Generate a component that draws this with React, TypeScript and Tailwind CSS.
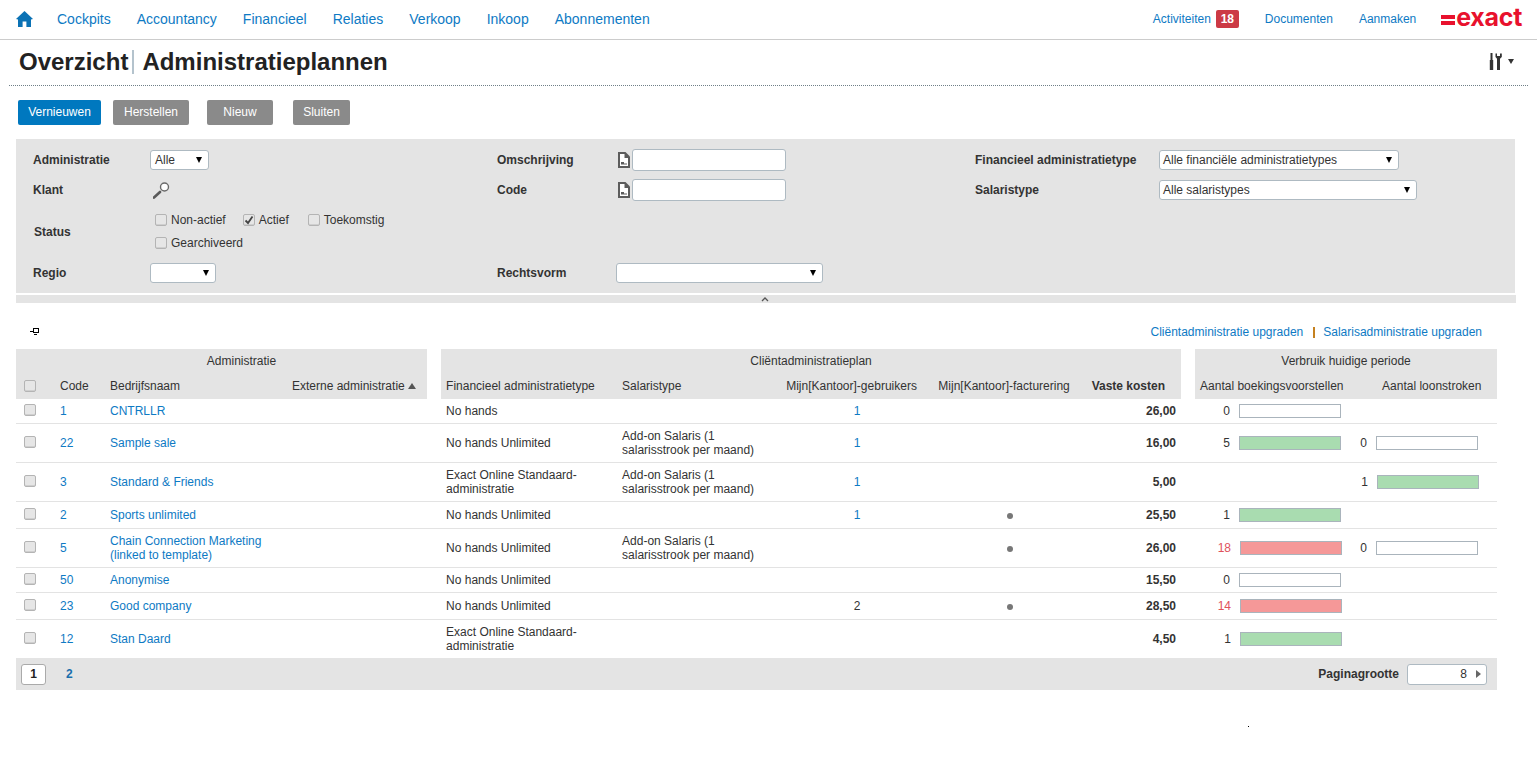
import { ReactNode } from 'react';

const navItems = ['Cockpits', 'Accountancy', 'Financieel', 'Relaties', 'Verkoop', 'Inkoop', 'Abonnementen'];

type Usage = { n: number; color: 'none' | 'green' | 'red'; shift?: boolean; numClass?: string };

type Row = {
  code: string;
  name: ReactNode;
  fin: ReactNode;
  sal?: boolean;
  users?: string;
  usersDark?: boolean;
  billing?: boolean;
  cost: string;
  boek?: Usage;
  loon?: Usage;
  h: string;
};

const twoLineExact = (
  <>
    Exact Online Standaard-
    <br />
    administratie
  </>
);

const rows: Row[] = [
  { code: '1', name: 'CNTRLLR', fin: 'No hands', users: '1', cost: '26,00', boek: { n: 0, color: 'none' }, h: 'h-[25px]' },
  { code: '22', name: 'Sample sale', fin: 'No hands Unlimited', sal: true, users: '1', cost: '16,00', boek: { n: 5, color: 'green' }, loon: { n: 0, color: 'none' }, h: 'h-[39px]' },
  { code: '3', name: 'Standard & Friends', fin: twoLineExact, sal: true, users: '1', cost: '5,00', loon: { n: 1, color: 'green', shift: true }, h: 'h-[39px]' },
  { code: '2', name: 'Sports unlimited', fin: 'No hands Unlimited', users: '1', billing: true, cost: '25,50', boek: { n: 1, color: 'green' }, h: 'h-[27px]' },
  {
    code: '5',
    name: (
      <>
        Chain Connection Marketing
        <br />
        (linked to template)
      </>
    ),
    fin: 'No hands Unlimited',
    sal: true,
    billing: true,
    cost: '26,00',
    boek: { n: 18, color: 'red', shift: true, numClass: 'text-[#e0525c]' },
    loon: { n: 0, color: 'none' },
    h: 'h-[39px]',
  },
  { code: '50', name: 'Anonymise', fin: 'No hands Unlimited', cost: '15,50', boek: { n: 0, color: 'none' }, h: 'h-[25px]' },
  { code: '23', name: 'Good company', fin: 'No hands Unlimited', users: '2', usersDark: true, billing: true, cost: '28,50', boek: { n: 14, color: 'red', shift: true, numClass: 'text-[#e0525c]' }, h: 'h-[27px]' },
  { code: '12', name: 'Stan Daard', fin: twoLineExact, cost: '4,50', boek: { n: 1, color: 'green', shift: true }, h: 'h-[38px]' },
];

function HomeIcon() {
  return (
    <svg width="17" height="16" viewBox="0 0 17 16" className="block">
      <path d="M8.5 0 L17 8 L15 8.6 V16 H10.4 V10.6 H6.6 V16 H2 V8.6 L0 8 Z" fill="#0b72b5" />
    </svg>
  );
}

function ExactLogo() {
  return (
    <div className="flex items-center">
      <div className="mt-[2px] flex w-[14px] flex-col gap-[2px]">
        <div className="h-[4px] bg-[#e8112d]" />
        <div className="h-[4px] bg-[#e8112d]" />
      </div>
      <span className="ml-px -mt-[3px] font-['Inter',sans-serif] text-[25px] leading-[26px] font-bold tracking-[-0.3px] text-[#e8112d]">exact</span>
    </div>
  );
}

function ToolsIcon() {
  return (
    <svg width="14" height="17" viewBox="0 0 14 17" className="block">
      <path d="M1.5 0 H3.5 V7 H4.2 V17 H0.8 V7 H1.5 Z" fill="#333" />
      <path d="M6.5 0.5 H8 V3 H11 V0.5 H12.8 V4 L11 5.8 V17 H8 V5.8 L6.5 4 Z" fill="#333" />
    </svg>
  );
}

function DocIcon() {
  return (
    <svg width="12" height="16" viewBox="0 0 12 16" className="block">
      <path d="M0 0 H7.5 L12 4.5 V16 H0 Z" fill="#5c5c5c" />
      <path d="M2 2 H6.5 V6 H10 V14 H2 Z" fill="#fff" />
      <path d="M3 10 H6 V11.5 H9 V12.5 H3 Z" fill="#5c5c5c" />
    </svg>
  );
}

function SearchIcon() {
  return (
    <svg width="17" height="17" viewBox="0 0 17 17" className="block">
      <path d="M1 15.5 L7 10" stroke="#5a5a5a" strokeWidth="2.6" strokeLinecap="round" />
      <circle cx="11.5" cy="5" r="4" fill="#fff" stroke="#6a6a6a" strokeWidth="1.4" />
    </svg>
  );
}

function PinIcon() {
  return (
    <svg width="9" height="7" viewBox="0 0 9 7" className="-mt-[2px] block">
      <path d="M0 3.5 H3" stroke="#000" />
      <rect x="3.5" y="0.5" width="5" height="4" fill="none" stroke="#000" />
      <path d="M4 6.5 H7" stroke="#000" />
    </svg>
  );
}

function Checkbox({ checked }: { checked?: boolean }) {
  return (
    <span className="flex h-3 w-3 shrink-0 items-center justify-center rounded-[2px] border border-[#b4b4b4] bg-[#e6e6e6] shadow-[inset_0_-1px_0_#cfcfcf]">
      {checked && (
        <svg width="10" height="10" viewBox="0 0 10 10">
          <path d="M1.5 5.5 L4 8 L8.5 1.5" fill="none" stroke="#444" strokeWidth="1.8" />
        </svg>
      )}
    </span>
  );
}

function Select({ width, label, pad = 'pl-1' }: { width: string; label?: string; pad?: string }) {
  return (
    <div className={`flex h-5 ${width} items-center justify-between rounded-[3px] border border-[#aebac2] bg-white pr-[6px] ${pad}`}>
      <span>{label}</span>
      <span className="h-0 w-0 border-x-[3.5px] border-t-[6px] border-x-transparent border-t-black" />
    </div>
  );
}

function TextField() {
  return (
    <div className="flex items-center gap-[2px] pl-px">
      <DocIcon />
      <input className="h-[22px] w-[154px] rounded-[3px] border border-[#aebac2] bg-white outline-none" />
    </div>
  );
}

function Label({ children }: { children: ReactNode }) {
  return <div className="font-bold text-[#333]">{children}</div>;
}

function UsageCell({ usage, numWidth }: { usage?: Usage; numWidth: string }) {
  if (!usage) return null;
  const fill = usage.color === 'green' ? 'bg-[#a9dcb0]' : usage.color === 'red' ? 'bg-[#f59898]' : 'bg-white';
  return (
    <div className={`flex items-center ${usage.shift ? 'ml-px' : ''}`}>
      <span className={`${numWidth} text-right ${usage.numClass ?? ''}`}>{usage.n}</span>
      <span className={`ml-[9px] h-[14px] w-[102px] border border-[#aab4bc] ${fill}`} />
    </div>
  );
}

function Btn({ children, className }: { children: ReactNode; className: string }) {
  return (
    <button className={`flex h-[25px] items-center justify-center rounded-[2px] pb-[2px] text-white ${className}`}>
      {children}
    </button>
  );
}

export default function App() {
  return (
    <div className="min-h-[772px] bg-white font-['Liberation_Sans',Arial,sans-serif] text-xs text-[#333]">
      {/* top navigation */}
      <header className="flex h-10 items-center justify-between border-b border-[#cccccc] pr-[15px] pb-[2px] pl-4">
        <nav className="flex items-center">
          <HomeIcon />
          <div className="ml-6 flex gap-[26px] text-sm text-[#0e7ac4]">
            {navItems.map((item) => (
              <a key={item}>{item}</a>
            ))}
          </div>
        </nav>
        <div className="flex items-center text-[#0e7ac4]">
          <a>Activiteiten</a>
          <span className="ml-[5px] flex h-[18px] w-[23px] items-center justify-center rounded-[2px] bg-[#cc3a45] font-bold text-white">
            18
          </span>
          <a className="ml-[26px]">Documenten</a>
          <a className="ml-[26px]">Aanmaken</a>
          <div className="ml-[25px]">
            <ExactLogo />
          </div>
        </div>
      </header>

      {/* page title */}
      <div className="mx-[9px] flex h-[46px] items-center justify-between border-b border-dotted border-[#6f7f87] pr-[14px] pb-[2px] pl-[10px]">
        <h1 className="flex items-center text-2xl leading-7 font-bold text-[#222]">
          Overzicht
          <span className="mr-[8px] ml-[4px] h-[24px] w-[2px] bg-[#b4c3cd]" />
          Administratieplannen
        </h1>
        <div className="flex items-center gap-[5px]">
          <ToolsIcon />
          <span className="h-0 w-0 border-x-[3.5px] border-t-[5px] border-x-transparent border-t-[#333]" />
        </div>
      </div>

      {/* actions */}
      <div className="mt-[14px] flex pl-[18px]">
        <Btn className="w-[83px] bg-[#0078bf]">Vernieuwen</Btn>
        <Btn className="ml-3 w-[76px] bg-[#8a8a8a]">Herstellen</Btn>
        <Btn className="ml-[18px] w-[66px] bg-[#8a8a8a]">Nieuw</Btn>
        <Btn className="ml-5 w-[57px] bg-[#8a8a8a]">Sluiten</Btn>
      </div>

      {/* filters */}
      <div className="mt-[14px] ml-4 grid h-[154px] w-[1499px] grid-cols-[117px_347px_120px_358px_184px_1fr] grid-rows-[30px_30px_52px_32px] items-center bg-[#e4e4e4] pt-[6px] pl-[17px]">
        <Label>Administratie</Label>
        <Select width="w-[59px]" label="Alle" />
        <Label>Omschrijving</Label>
        <TextField />
        <Label>Financieel administratietype</Label>
        <Select width="w-[240px]" pad="pl-[3px]" label="Alle financiële administratietypes" />

        <Label>Klant</Label>
        <div className="pl-[3px]">
          <SearchIcon />
        </div>
        <Label>Code</Label>
        <TextField />
        <Label>Salaristype</Label>
        <Select width="w-[258px]" pad="pl-[3px]" label="Alle salaristypes" />

        <div className="mt-[2px] pl-px">
          <Label>Status</Label>
        </div>
        <div className="flex flex-col gap-[9px] pl-[5px]">
          <div className="flex h-[14px] items-center">
            <Checkbox />
            <span className="ml-1">Non-actief</span>
            <span className="ml-[17px]">
              <Checkbox checked />
            </span>
            <span className="ml-1">Actief</span>
            <span className="ml-[19px]">
              <Checkbox />
            </span>
            <span className="ml-1">Toekomstig</span>
          </div>
          <div className="flex h-[14px] items-center">
            <Checkbox />
            <span className="ml-1">Gearchiveerd</span>
          </div>
        </div>
        <div />
        <div />
        <div />
        <div />

        <Label>Regio</Label>
        <Select width="w-[66px]" />
        <Label>Rechtsvorm</Label>
        <div className="-ml-px">
          <Select width="w-[207px]" />
        </div>
        <div />
        <div />
      </div>

      {/* collapse handle */}
      <div className="mt-[2px] ml-4 flex h-2 w-[1500px] items-center justify-center bg-[#e4e4e4] pr-[2px]">
        <svg width="8" height="5" viewBox="0 0 8 5" className="block">
          <path d="M1 4 L4 1 L7 4" fill="none" stroke="#555" strokeWidth="1.3" />
        </svg>
      </div>

      {/* table toolbar */}
      <div className="mt-[21px] flex h-4 items-center justify-between pr-[55px] pl-[30px]">
        <PinIcon />
        <div className="flex items-center text-[#0e7ac4]">
          <a>Cliëntadministratie upgraden</a>
          <span className="mr-[8px] ml-[10px] h-[11px] w-[2px] bg-[#c5811f]" />
          <a>Salarisadministratie upgraden</a>
        </div>
      </div>

      {/* table */}
      <table className="mt-[9px] ml-4 w-[1481px] table-fixed border-separate border-spacing-0 text-left">
        <colgroup>
          <col className="w-[38px]" />
          <col className="w-[50px]" />
          <col className="w-[182px]" />
          <col className="w-[141px]" />
          <col className="w-[14px]" />
          <col className="w-[175px]" />
          <col className="w-[164px]" />
          <col className="w-[153px]" />
          <col className="w-[142px]" />
          <col className="w-[106px]" />
          <col className="w-[14px]" />
          <col className="w-[155px]" />
          <col className="w-[147px]" />
        </colgroup>
        <thead>
          <tr className="h-[25px]">
            <th colSpan={4} className="bg-[#e4e4e4] pb-[2px] pl-[40px] text-center font-normal">Administratie</th>
            <th />
            <th colSpan={5} className="bg-[#e4e4e4] pb-[2px] text-center font-normal">Cliëntadministratieplan</th>
            <th />
            <th colSpan={2} className="bg-[#e4e4e4] pb-[2px] text-center font-normal">Verbruik huidige periode</th>
          </tr>
          <tr className="h-[25px] font-normal">
            <th className="bg-[#e4e4e4] pb-[2px] pl-2 font-normal"><Checkbox /></th>
            <th className="bg-[#e4e4e4] pb-[2px] pl-[6px] font-normal">Code</th>
            <th className="bg-[#e4e4e4] pb-[2px] pl-[6px] font-normal">Bedrijfsnaam</th>
            <th className="bg-[#e4e4e4] pb-[2px] pl-[6px] font-normal whitespace-nowrap">
              <span className="flex items-center gap-[3px]">
                Externe administratie
                <span className="h-0 w-0 border-x-4 border-b-[6px] border-x-transparent border-b-[#555]" />
              </span>
            </th>
            <th />
            <th className="bg-[#e4e4e4] pb-[2px] pl-[5px] font-normal whitespace-nowrap">Financieel administratietype</th>
            <th className="bg-[#e4e4e4] pb-[2px] pl-[6px] font-normal">Salaristype</th>
            <th className="bg-[#e4e4e4] pr-[10px] pb-[2px] text-center font-normal whitespace-nowrap">Mijn[Kantoor]-gebruikers</th>
            <th className="bg-[#e4e4e4] pb-[2px] text-center font-normal whitespace-nowrap">Mijn[Kantoor]-facturering</th>
            <th className="bg-[#e4e4e4] pr-[16px] pb-[2px] text-right font-bold">Vaste kosten</th>
            <th />
            <th className="bg-[#e4e4e4] pb-[2px] pl-[5px] font-normal whitespace-nowrap">Aantal boekingsvoorstellen</th>
            <th className="bg-[#e4e4e4] pb-[2px] pl-[32px] font-normal whitespace-nowrap">Aantal loonstroken</th>
          </tr>
        </thead>
        <tbody>
          {rows.map((row, i) => {
            const td = `leading-[14px] ${i < rows.length - 1 ? 'border-b border-[#e3e3e3]' : ''}`;
            return (
              <tr key={row.code} className={row.h}>
                <td className={`${td} pb-[2px] pl-2`}><Checkbox /></td>
                <td className={`${td} pl-[6px] text-[#0e7ac4]`}>{row.code}</td>
                <td className={`${td} pl-[6px] text-[#0e7ac4]`}>{row.name}</td>
                <td className={td} />
                <td className={td} />
                <td className={`${td} pl-[5px]`}>{row.fin}</td>
                <td className={`${td} pl-[6px]`}>
                  {row.sal && (
                    <>
                      Add-on Salaris (1
                      <br />
                      salarisstrook per maand)
                    </>
                  )}
                </td>
                <td className={`${td} pl-[1px] text-center ${row.usersDark ? '' : 'text-[#0e7ac4]'}`}>{row.users}</td>
                <td className={`${td} pl-3 text-center`}>
                  {row.billing && <span className="inline-block h-[6px] w-[6px] rounded-full bg-[#777]" />}
                </td>
                <td className={`${td} pr-[5px] text-right font-bold`}>{row.cost}</td>
                <td className={td} />
                <td className={td}><UsageCell usage={row.boek} numWidth="w-[35px]" /></td>
                <td className={td}><UsageCell usage={row.loon} numWidth="w-[17px]" /></td>
              </tr>
            );
          })}
        </tbody>
      </table>

      {/* pager */}
      <div className="ml-4 flex h-8 w-[1481px] items-center justify-between bg-[#e4e4e4] pr-[10px] pl-[5px]">
        <div className="flex items-center">
          <span className="flex h-[21px] w-[25px] items-center justify-center rounded-[3px] border border-[#aaaaaa] bg-white font-bold text-[#222]">
            1
          </span>
          <a className="ml-[20px] font-bold text-[#1a6fad]">2</a>
        </div>
        <div className="flex items-center">
          <span className="font-bold">Paginagrootte</span>
          <span className="ml-2 flex h-[21px] w-[80px] items-center justify-end rounded-[3px] border border-[#aebac2] bg-white pr-[5px]">
            <span>8</span>
            <span className="ml-[9px] h-0 w-0 border-y-4 border-l-[5px] border-y-transparent border-l-[#666]" />
          </span>
        </div>
      </div>

      <div className="mt-9 ml-[1248px] h-px w-px bg-black" />
    </div>
  );
}
